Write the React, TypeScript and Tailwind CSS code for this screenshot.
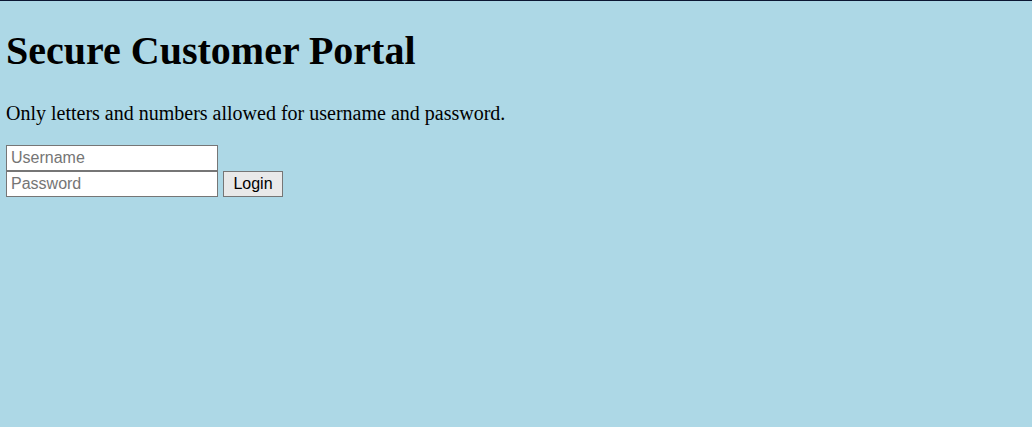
export default function App() {
  return (
    <div className="min-h-[427px] border-t border-[#0b1633] bg-[#add8e6] pl-[6px] pt-[27px] font-['Liberation_Serif',serif] text-black">
      <h1 className="m-0 text-[40px] font-bold leading-[46px]">
        Secure Customer Portal
      </h1>

      <p className="mt-[28px] text-[20px] leading-[23px]">
        Only letters and numbers allowed for username and password.
      </p>

      <form className="mt-[20px] font-['Liberation_Sans',Arial,sans-serif] text-[16px]">
        <div className="flex">
          <input
            type="text"
            placeholder="Username"
            className="h-[26px] w-[212px] border border-[#767676] bg-white px-[4px] text-[16px] leading-[18px] text-black outline-none placeholder:text-[#757575]"
          />
        </div>
        <div className="flex items-start gap-[5px]">
          <input
            type="password"
            placeholder="Password"
            className="h-[26px] w-[212px] border border-[#767676] bg-white px-[4px] text-[16px] leading-[18px] text-black outline-none placeholder:text-[#757575]"
          />
          <button
            type="button"
            className="h-[26px] w-[60px] border border-[#767676] bg-[#e9e9e9] text-[16px] leading-[18px] text-black"
          >
            Login
          </button>
        </div>
      </form>
    </div>
  )
}
